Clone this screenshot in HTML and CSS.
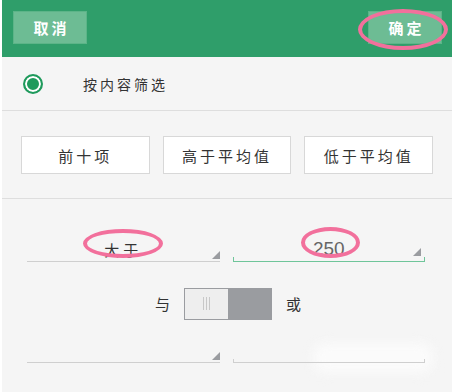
FILE: index.html
```html
<!DOCTYPE html>
<html lang="zh">
<head>
    <meta charset="UTF-8">
    <meta name="viewport" content="width=device-width, initial-scale=1.0">
    <title>筛选</title>
    <link rel="stylesheet" href="styles.css">
</head>
<body>
    <div class="app">
        <div class="topbar">
            <button class="bar-btn">取消</button>
            <button class="bar-btn">确定</button>
            <span class="mark mark-ok"></span>
        </div>

        <div class="radio-row">
            <span class="radio"></span>
            <span class="radio-label">按内容筛选</span>
        </div>

        <div class="quick-row">
            <button class="quick-btn">前十项</button>
            <button class="quick-btn">高于平均值</button>
            <button class="quick-btn">低于平均值</button>
        </div>

        <div class="cond">
            <div class="field-row">
                <div class="select">
                    <span class="select-text">大于</span>
                    <span class="caret"></span>
                    <span class="mark mark-op"></span>
                </div>
                <div class="input active">
                    <span class="input-text">250</span>
                    <span class="caret"></span>
                    <span class="mark mark-val"></span>
                </div>
            </div>

            <div class="logic-row">
                <span class="logic-label">与</span>
                <div class="switch">
                    <span class="switch-knob"><span class="grip"></span></span>
                    <span class="switch-off"></span>
                </div>
                <span class="logic-label">或</span>
            </div>

            <div class="field-row last">
                <div class="select">
                    <span class="select-text"></span>
                    <span class="caret"></span>
                </div>
                <div class="input">
                    <span class="input-text"></span>
                    <span class="blur"></span>
                </div>
            </div>
        </div>
    </div>
</body>
</html>
```

FILE: styles.css
```css
* {
    box-sizing: border-box;
}
body {
    margin: 0;
    background-color: #fff;
    font-family: "Noto Sans CJK SC", "Noto Sans", sans-serif;
    color: #333;
}
.app {
    margin: 0 5px 0 2px;
    height: 392px;
    background-color: #f5f5f5;
}
.topbar {
    position: relative;
    height: 57px;
    padding: 11px 10px 0 11px;
    background-color: #2f9e6a;
    display: flex;
    justify-content: space-between;
    align-items: flex-start;
}
.bar-btn {
    width: 74px;
    height: 33px;
    border: 1px solid #5cb488;
    background-color: #6dbc94;
    color: #fff;
    font-family: inherit;
    font-size: 15px;
    font-weight: bold;
    letter-spacing: 3px;
    padding: 0 0 0 3px;
}
.mark {
    position: absolute;
    border: 4px solid #f2709c;
    border-radius: 50%;
}
.mark-ok {
    left: 356px;
    top: 9px;
    width: 90px;
    height: 41px;
}
.radio-row {
    height: 54px;
    padding-left: 21px;
    display: flex;
    align-items: center;
    border-bottom: 1px solid #dedede;
}
.radio {
    width: 20px;
    height: 20px;
    border-radius: 50%;
    border: 2px solid #1f9a5c;
    background-color: #1f9a5c;
    box-shadow: inset 0 0 0 2px #fff;
}
.radio-label {
    margin-left: 40px;
    font-size: 14px;
    letter-spacing: 3px;
    color: #333;
}
.quick-row {
    height: 88px;
    padding: 25px 19px 0 19px;
    display: flex;
    gap: 13px;
    border-bottom: 1px solid #dedede;
}
.quick-btn {
    flex: 1;
    height: 38px;
    background-color: #fff;
    border: 1px solid #d8d8d8;
    font-family: inherit;
    font-size: 15px;
    letter-spacing: 3px;
    color: #333;
}
.cond {
    padding: 26px 27px 0 25px;
}
.field-row {
    display: flex;
    gap: 13px;
}
.select,
.input {
    position: relative;
    flex: 1;
    height: 37px;
    display: flex;
    align-items: flex-end;
    justify-content: center;
}
.select {
    border-bottom: 1px solid #cfcfcf;
}
.input::after {
    content: "";
    position: absolute;
    left: 0;
    right: 0;
    bottom: 0;
    height: 3px;
    border: 1px solid #cfcfcf;
    border-top: none;
}
.input.active::after {
    height: 4px;
    border-color: #6fc59a;
}
.select-text {
    font-size: 15px;
    letter-spacing: 4px;
    color: #333;
    padding-bottom: 1px;
}
.input-text {
    font-family: "Liberation Sans", sans-serif;
    font-size: 19px;
    color: #666;
    padding-bottom: 2px;
}
.caret {
    position: absolute;
    right: 0;
    bottom: 2px;
    width: 0;
    height: 0;
    border-left: 8px solid transparent;
    border-bottom: 8px solid #9a9ca0;
}
.input .caret {
    right: 4px;
    bottom: 6px;
}
.mark-op {
    left: 56px;
    top: 4px;
    width: 80px;
    height: 29px;
}
.mark-val {
    left: 68px;
    top: 2px;
    width: 59px;
    height: 31px;
}
.logic-row {
    margin-top: 26px;
    height: 31px;
    display: flex;
    justify-content: center;
    align-items: center;
    gap: 14px;
    padding-left: 4px;
}
.logic-label {
    font-size: 15px;
    color: #333;
}
.switch {
    width: 88px;
    height: 32px;
    display: flex;
    border: 1px solid #9a9ca0;
}
.switch-knob {
    width: 43px;
    background-color: #eeeeee;
    display: flex;
    align-items: center;
    justify-content: center;
}
.grip {
    width: 7px;
    height: 13px;
    border-left: 1px solid #c8c8c8;
    border-right: 1px solid #c8c8c8;
    background: linear-gradient(#c8c8c8, #c8c8c8) center / 1px 100% no-repeat;
}
.switch-off {
    flex: 1;
    background-color: #9a9ca0;
}
.field-row.last {
    margin-top: 7px;
}
.blur {
    position: absolute;
    right: -8px;
    bottom: -10px;
    width: 120px;
    height: 30px;
    background-color: #fbfbfb;
    border-radius: 12px;
    filter: blur(6px);
}
```
